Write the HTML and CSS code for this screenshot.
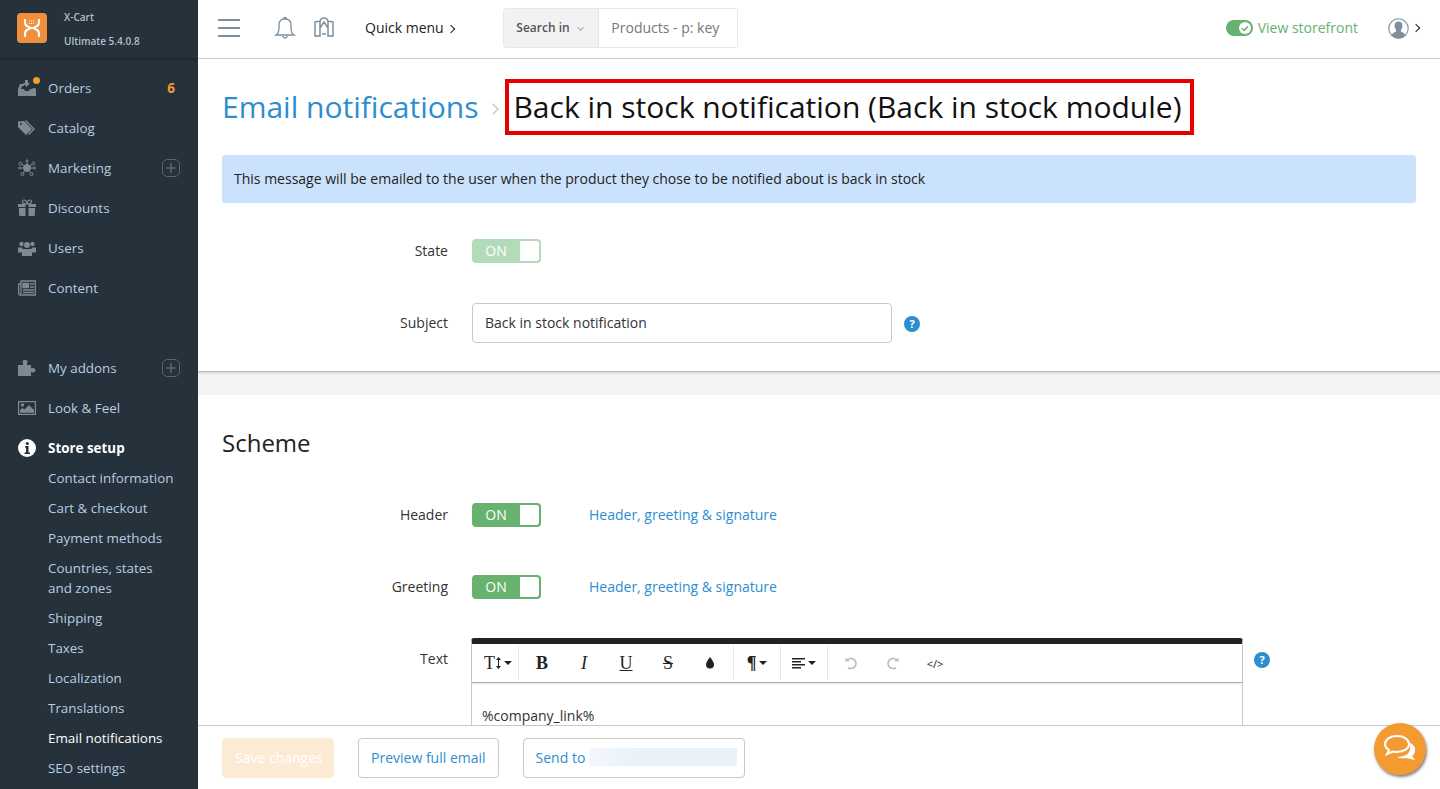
FILE: index.html
```html
<!DOCTYPE html>
<html lang="en">
<head>
  <meta charset="UTF-8">
  <title>Back in stock notification</title>
  <link rel="stylesheet" href="styles.css">
</head>
<body>
  <aside class="sidebar">
    <div class="brand">
      <div class="logo">
        <svg width="18" height="18" viewBox="0 0 18 18" fill="none" stroke="#fff" stroke-width="2.200"><path d="M2 0v3q0 4 4 5v2q-4 1-4 5v3M16 0v3q0 4-4 5v2q4 1 4 5v3M5 9h8"/><path d="M6 2h6M6 4.500h6" stroke-width="1.200" stroke-dasharray="1 1"/></svg>
      </div>
      <div class="brand-text">
        <span>X-Cart</span>
        <span>Ultimate 5.4.0.8</span>
      </div>
    </div>
    <nav class="menu">
      <a class="menu-item">
        <svg class="menu-icon" viewBox="0 0 18 16" fill="#7d8a94"><path d="M0 9l2-5h4v2H4l-1 3h3l1 2h4l1-2h3l-.5-1H17l1 1v7H0z"/><path d="M7 0h3v3h2l-3.500 4L5 3h2z"/></svg>
        <span class="dot"></span>
        <span class="menu-label">Orders</span>
        <span class="count">6</span>
      </a>
      <a class="menu-item">
        <svg class="menu-icon" viewBox="0 0 18 16" fill="#7d8a94"><path d="M0 1.500V7l8 8 6-6-8-8z"/><path d="M8 0l9 9-6 6-1-1 5-5-8-8z"/><circle cx="3" cy="4" r="1" fill="#25313b"/></svg>
        <span class="menu-label">Catalog</span>
      </a>
      <a class="menu-item">
        <svg class="menu-icon" viewBox="0 0 18 18" fill="none" stroke="#7d8a94" stroke-width="1"><circle cx="9" cy="9" r="3.500" fill="#7d8a94"/><path d="M9 9L3.500 5M9 9l5.500-4M9 9H2M9 9h7M9 9l-4 5M9 9l4 5M9 9V2"/><circle cx="2.500" cy="4.500" r="1.500" fill="#25313b"/><circle cx="15.500" cy="4.500" r="1.500" fill="#25313b"/><circle cx="1.500" cy="9" r="1" fill="#25313b"/><circle cx="16.500" cy="9" r="1" fill="#25313b"/><circle cx="4.500" cy="15" r="1.500" fill="#25313b"/><circle cx="13.500" cy="15" r="1.500" fill="#25313b"/><circle cx="9" cy="1.800" r="1" fill="#25313b"/></svg>
        <span class="menu-label">Marketing</span>
        <svg class="plus" width="18" height="18" viewBox="0 0 18 18" fill="none" stroke="#5a6670"><rect x=".5" y=".5" width="17" height="17" rx="5"/><path d="M4 9h10M9 4v10" stroke-width="1.500"/></svg>
      </a>
      <a class="menu-item">
        <svg class="menu-icon" viewBox="0 0 18 16" fill="#7d8a94"><path d="M0 4h7.500v3H0zM10.500 4H18v3h-7.500zM1 8h6.500v8H2.500Q1 16 1 14.500zM10.500 8H17v6.500Q17 16 15.500 16h-5z"/><path d="M9 4Q5 4 4.500 2T6 0q2 0 3 3 1-3 3-3t1.500 2T9 4z" fill="none" stroke="#7d8a94" stroke-width="1.200"/></svg>
        <span class="menu-label">Discounts</span>
      </a>
      <a class="menu-item">
        <svg class="menu-icon" viewBox="0 0 18 16" fill="#7d8a94"><circle cx="3.500" cy="4" r="2.200"/><circle cx="14.500" cy="4" r="2.200"/><circle cx="9" cy="5" r="3"/><path d="M0 7.500h4l1 2v3H0zM14 7.500h4v5h-5v-3zM5 9h8q1 0 1 1.500V16H4v-5.500Q4 9 5 9z"/></svg>
        <span class="menu-label">Users</span>
      </a>
      <a class="menu-item">
        <svg class="menu-icon" viewBox="0 0 18 16" fill="none" stroke="#7d8a94" stroke-width="1.300"><path d="M3 1h14.300v14H2q-1.300 0-1.300-1.500V4H3zM3 4v10"/><path d="M5 3.500h5.500v4H5z" fill="#7d8a94"/><path d="M12 4h4M12 7h4M5 10h11M5 12.500h11"/></svg>
        <span class="menu-label">Content</span>
      </a>
      <a class="menu-item group-start">
        <svg class="menu-icon" viewBox="0 0 18 16" fill="#7d8a94"><path d="M0 5h5V3q-1-1-.500-2T7 0t2.500 1T9 3v2h4v3.500q1-1 2.500-.5t2 1.800-1.500 2.400-3-.7V16H0z"/></svg>
        <span class="menu-label">My addons</span>
        <svg class="plus" width="18" height="18" viewBox="0 0 18 18" fill="none" stroke="#5a6670"><rect x=".5" y=".5" width="17" height="17" rx="5"/><path d="M4 9h10M9 4v10" stroke-width="1.500"/></svg>
      </a>
      <a class="menu-item">
        <svg class="menu-icon" viewBox="0 0 18 16" fill="#7d8a94"><path d="M0 1h18v14H0zm1.200 1.200v11.600h15.600V2.200z"/><circle cx="4.500" cy="5" r="1.700"/><path d="M2 12.800V10l2.500-2 2 1.500L11 5l5 5v2.800z"/></svg>
        <span class="menu-label">Look &amp; Feel</span>
      </a>
      <a class="menu-item active">
        <svg class="menu-icon" viewBox="0 0 18 18"><circle cx="9" cy="9" r="9" fill="#fff"/><path d="M7 7h3.500v6.500H12V15H6.500v-1.500H8V8.500H7z" fill="#25313b"/><circle cx="9.300" cy="4.500" r="1.600" fill="#25313b"/></svg>
        <span class="menu-label">Store setup</span>
      </a>
      <ul class="submenu">
        <li>Contact information</li>
        <li>Cart &amp; checkout</li>
        <li>Payment methods</li>
        <li>Countries, states and zones</li>
        <li>Shipping</li>
        <li>Taxes</li>
        <li>Localization</li>
        <li>Translations</li>
        <li class="current">Email notifications</li>
        <li>SEO settings</li>
      </ul>
    </nav>
  </aside>

  <div class="page">
    <header class="topbar">
      <div class="burger"><i></i><i></i><i></i></div>
      <svg class="bell" width="22" height="24" viewBox="0 0 22 24" fill="none" stroke="#7d8f9c" stroke-width="1.300"><path d="M2 19q3-2 3-7V9q0-6 6-6t6 6v3q0 5 3 7z"/><path d="M9.500 3q0-1.500 1.500-1.500T12.500 3M8.500 20q1 2 2.500 2t2.500-2"/></svg>
      <svg class="store" width="20" height="22" viewBox="0 0 20 22" fill="none" stroke="#7d8f9c" stroke-width="1.500"><path d="M1 5l5-1v15H1zM19 5l-5-1v15h5zM6 4q1-3 4-3t4 3M6 11l4-6 4 6M8 17h4"/></svg>
      <a class="quick">Quick menu <span class="chev"></span></a>
      <div class="search">
        <span class="search-in"><span class="search-label">Search in</span> <span class="caret"></span></span>
        <span class="search-field">Products - p: key</span>
      </div>
      <a class="storefront">
        <span class="store-toggle"><svg width="12" height="12" viewBox="0 0 12 12"><circle cx="6" cy="6" r="6" fill="#fff"/><path d="M3 6.200l2.200 2.200L9 4.200" fill="none" stroke="#66b26e" stroke-width="1.500"/></svg></span>
        <span class="storefront-text">View storefront</span>
      </a>
      <svg class="avatar" width="21" height="21" viewBox="0 0 21 21"><circle cx="10.500" cy="10.500" r="9.700" fill="#fff" stroke="#7d8f9c" stroke-width="1.100"/><path d="M3.500 17.500q1-3 4.500-4v-1.500Q6.500 10 6.500 7.500 7 3.500 10.500 3.500t4 4q0 2.500-1.500 4.500v1.500q3.500 1 4.500 4-3 3-7 3t-7-3z" fill="#7d8f9c"/></svg>
      <span class="chev user-chev"></span>
    </header>

    <main class="content">
      <section class="panel">
        <h1 class="title">
          <a class="crumb">Email notifications</a>
          <span class="crumb-sep"></span>
          <span class="title-box">Back in stock notification (Back in stock module)</span>
        </h1>
        <div class="alert">This message will be emailed to the user when the product they chose to be notified about is back in stock</div>
        <div class="row state-row">
          <label class="row-label">State</label>
          <span class="toggle faded"><span class="toggle-on">ON</span><span class="toggle-knob"></span></span>
        </div>
        <div class="row subject-row">
          <label class="row-label">Subject</label>
          <input class="text-input" type="text" value="Back in stock notification">
          <span class="help">?</span>
        </div>
      </section>

      <section class="panel scheme">
        <h2>Scheme</h2>
        <div class="row header-row">
          <label class="row-label">Header</label>
          <span class="toggle"><span class="toggle-on">ON</span><span class="toggle-knob"></span></span>
          <a class="row-link">Header, greeting &amp; signature</a>
        </div>
        <div class="row greeting-row">
          <label class="row-label">Greeting</label>
          <span class="toggle"><span class="toggle-on">ON</span><span class="toggle-knob"></span></span>
          <a class="row-link">Header, greeting &amp; signature</a>
        </div>
        <div class="row text-row">
          <label class="row-label">Text</label>
          <div class="editor">
            <div class="toolbar">
              <div class="tool-group first">
                <span class="tool serif wide">T<svg class="size-arrow" width="5" height="12" viewBox="0 0 5 12" fill="#222"><path d="M2 2.500h1v7H2z"/><path d="M2.500 0L5 3H0zM2.500 12L5 9H0z"/></svg><span class="tcaret"></span></span>
              </div>
              <div class="tool-group mid">
                <span class="tool serif"><b>B</b></span>
                <span class="tool serif"><i>I</i></span>
                <span class="tool serif"><u>U</u></span>
                <span class="tool serif"><s>S</s></span>
                <span class="tool"><svg width="10" height="12" viewBox="0 0 10 12"><path d="M5 0q4 5 4 7.500a4 4 0 0 1-8 0Q1 5 5 0z" fill="#222"/></svg></span>
              </div>
              <div class="tool-group">
                <span class="tool serif wide2"><b>¶</b><span class="tcaret"></span></span>
              </div>
              <div class="tool-group">
                <span class="tool wide2"><svg width="13" height="11" viewBox="0 0 13 11" fill="#222"><path d="M0 0h13v1.500H0zM0 3h9v1.500H0zM0 6h13v1.500H0zM0 9h9v1.500H0z"/></svg><span class="tcaret"></span></span>
              </div>
              <div class="tool-group last">
                <span class="tool"><svg width="14" height="14" viewBox="0 0 14 14" fill="none" stroke="#bbb" stroke-width="1.600"><path d="M4 11.500A5 5 0 1 0 3 4.500"/><path d="M1.500 1.500v4h4" fill="#bbb" stroke="none"/></svg></span>
                <span class="tool"><svg width="14" height="14" viewBox="0 0 14 14" fill="none" stroke="#bbb" stroke-width="1.600"><path d="M10 11.500a5 5 0 1 1 1-7"/><path d="M12.500 1.500v4h-4" fill="#bbb" stroke="none"/></svg></span>
                <span class="tool code">&lt;/&gt;</span>
              </div>
            </div>
            <div class="editor-body">%company_link%</div>
          </div>
          <span class="help">?</span>
        </div>
      </section>
    </main>

    <footer class="actions">
      <button class="btn save" type="button">Save changes</button>
      <button class="btn" type="button">Preview full email</button>
      <button class="btn send" type="button">Send to <span class="blurred"></span></button>
    </footer>
  </div>

  <a class="chat">
    <svg width="36" height="30" viewBox="0 0 36 30"><path d="M25 8q9 2 8 9 0 3-3 5l3 4-9-2q-5 1-9-1 11 0 13-7 1-4-3-8z" fill="#fff"/><path d="M15 2C8 2 3 5.500 3 10c0 2.500 1.500 4.500 4 6l-2 4 6-2.500q2 .5 4 .5c7 0 12-3.500 12-8S22 2 15 2z" fill="none" stroke="#fff" stroke-width="2"/></svg>
  </a>
</body>
</html>
```

FILE: styles.css
```css
* {
  box-sizing: border-box;
}

body {
  font-family: 'Open Sans', sans-serif;
  font-size: 14px;
  color: #333;
  background: #fff;
  display: flex;
  height: 100vh;
  margin: 0;
  overflow: hidden;
}

a {
  text-decoration: none;
}

/* sidebar */
.sidebar {
  flex: 0 0 198px;
  background: #25313b;
  color: #b8cde0;
  font-size: 13.4px;
  overflow: hidden;
}

.brand {
  display: flex;
  height: 58px;
  padding: 13px 0 0 17px;
  box-shadow: 0 1px 3px rgba(0, 0, 0, 0.35);
}

.logo {
  width: 30px;
  height: 30px;
  background: #f18f3c;
  border-radius: 4px;
  display: flex;
  align-items: center;
  justify-content: center;
}

.brand-text {
  display: flex;
  flex-direction: column;
  gap: 10px;
  margin: -3px 0 0 17px;
  font-size: 10px;
  line-height: 14px;
  font-weight: 600;
  color: #b5bfc8;
}

.menu {
  padding-top: 10px;
}

.menu-item {
  display: flex;
  align-items: center;
  position: relative;
  height: 40px;
  padding: 0 18px;
}

.menu-icon {
  flex: 0 0 18px;
  width: 18px;
  height: 18px;
  margin-right: 12px;
}

.menu-label {
  flex: 1;
  padding-bottom: 1px;
}

.dot {
  position: absolute;
  left: 33px;
  top: 9px;
  width: 7px;
  height: 7px;
  background: #f59a2f;
  border-radius: 50%;
}

.count {
  color: #f59a2f;
  font-weight: 700;
  margin-right: 5px;
}

.group-start {
  margin-top: 40px;
}

.active {
  color: #fff;
  font-weight: 700;
}

.submenu {
  list-style: none;
  margin: -5px 0 0;
  padding: 0 20px 0 48px;
}

.submenu li {
  padding: 5px 0;
  line-height: 20px;
}

.submenu .current {
  color: #fff;
}

/* top bar */
.page {
  flex: 1;
  min-width: 0;
  display: flex;
  flex-direction: column;
}

.topbar {
  flex: 0 0 59px;
  display: flex;
  align-items: center;
  padding: 0 17px 2px 20px;
  border-bottom: 1px solid #c8c8c8;
}

.burger {
  width: 22px;
  margin-right: 34px;
}

.burger i {
  display: block;
  height: 2px;
  background: #7d8f9c;
  margin: 6px 0;
}

.bell {
  margin-top: -1px;
}

.store {
  margin: 0 0 0 18px;
}

.quick {
  color: #222;
  margin-left: 31px;
  padding-bottom: 2px;
}

.chev {
  display: inline-block;
  width: 6px;
  height: 6px;
  border-top: 1px solid #222;
  border-right: 1px solid #222;
  transform: rotate(45deg);
  margin: 0 4px 1px 1px;
}

.search {
  display: flex;
  height: 40px;
  width: 235px;
  margin-left: 45px;
  border: 1px solid #e8e8e8;
  border-radius: 3px;
}

.search-in {
  display: flex;
  align-items: center;
  padding: 0 12px;
  width: 95px;
  background: #f2f2f2;
  border-right: 1px solid #e4e4e4;
  font-size: 12px;
  font-weight: 600;
  color: #555;
  white-space: nowrap;
  gap: 5px;
}

.search-label {
  padding-bottom: 2px;
}

.caret {
  width: 5px;
  height: 5px;
  border-right: 1px solid #aaa;
  border-bottom: 1px solid #aaa;
  transform: rotate(45deg);
  margin: -2px 0 0 3px;
}

.search-field {
  padding: 10px 12px;
  color: #777;
  line-height: 18px;
  white-space: nowrap;
}

.storefront {
  display: flex;
  align-items: center;
  gap: 5px;
  margin-left: auto;
  color: #66b26e;
}

.storefront-text {
  padding-bottom: 2px;
}

.store-toggle {
  display: flex;
  align-items: center;
  justify-content: flex-end;
  width: 27px;
  height: 16px;
  padding-right: 2px;
  background: #66b26e;
  border-radius: 8px;
}

.avatar {
  margin-left: 30px;
}

.user-chev {
  margin-left: 4px;
}

/* content */
.content {
  flex: 1;
  min-height: 0;
  overflow: hidden;
  background: #f3f3f3;
}

.panel {
  background: #fff;
  padding: 0 24px;
}

.panel:first-child {
  height: 313px;
  border-bottom: 1px solid #bbb;
  box-shadow: 0 1px 2px rgba(0, 0, 0, 0.15);
  padding-top: 20px;
}

.title {
  display: flex;
  align-items: center;
  height: 56px;
  margin: 0;
  font-size: 30px;
  font-weight: 400;
  white-space: nowrap;
}

.crumb {
  color: #2d8ecf;
  padding-bottom: 2px;
}

.crumb-sep {
  width: 8px;
  height: 8px;
  border-top: 1.500px solid #b8b8b8;
  border-right: 1.500px solid #b8b8b8;
  transform: rotate(45deg);
  margin: 4px 8px 0 11px;
}

.title-box {
  border: 4px solid #e60000;
  color: #111;
  padding: 0 8px 0 4px;
  height: 56px;
  line-height: 47px;
}

.alert {
  height: 48px;
  margin-top: 20px;
  padding: 14px 12px;
  line-height: 20px;
  background: #cbe2fc;
  border-radius: 3px;
  color: #222;
}

.row {
  display: flex;
  align-items: center;
}

.row-label {
  width: 226px;
  text-align: right;
  margin-right: 24px;
  padding-bottom: 2px;
  color: #333;
}

.state-row {
  margin-top: 36px;
}

.subject-row {
  margin-top: 40px;
}

.toggle {
  display: flex;
  width: 69px;
  height: 24px;
  border: 2px solid #66b26e;
  border-radius: 4px;
  background: #66b26e;
  overflow: hidden;
  color: #fff;
}

.toggle.faded {
  border-color: #b2dbb8;
  background: #b2dbb8;
}

.toggle-on {
  flex: 1;
  text-align: center;
  line-height: 20px;
  padding-right: 2px;
}

.toggle-knob {
  width: 19px;
  background: #fff;
  border-radius: 0 2px 2px 0;
}

.text-input {
  width: 420px;
  height: 40px;
  padding: 0 12px 2px;
  border: 1px solid #c8c8c8;
  border-radius: 4px;
  font: 14px 'Open Sans', sans-serif;
  color: #333;
}

.help {
  width: 16px;
  height: 16px;
  margin: 2px 0 0 12px;
  background: #2d8ecf;
  border-radius: 50%;
  color: #fff;
  font-size: 11px;
  font-weight: 700;
  line-height: 16px;
  text-align: center;
}

.scheme {
  margin-top: 23px;
  height: 500px;
  padding-top: 33px;
}

.scheme h2 {
  margin: 0;
  font-size: 24px;
  font-weight: 400;
  line-height: 30px;
  color: #222;
}

.header-row {
  margin-top: 45px;
}

.greeting-row {
  margin-top: 48px;
}

.row-link {
  margin-left: 48px;
  padding-bottom: 2px;
  color: #2d8ecf;
}

.text-row {
  margin-top: 39px;
  align-items: flex-start;
}

.text-row .row-label {
  margin-top: 11px;
  margin-right: 23px;
}

.text-row .help {
  margin: 14px 0 0 11px;
}

/* editor */
.editor {
  width: 772px;
  border: 1px solid #c8c8c8;
  border-top: 6px solid #222;
  border-radius: 3px 3px 0 0;
  height: 120px;
}

.toolbar {
  display: flex;
  height: 39px;
  border-bottom: 1px solid #aaa;
  box-shadow: 0 1px 2px rgba(0, 0, 0, 0.1);
  padding: 2px 0;
}

.tool-group {
  display: flex;
  border-right: 1px solid #e8e8e8;
}

.tool-group.mid {
  padding: 0 2px;
}

.tool-group.last {
  border-right: 0;
  padding-left: 2px;
}

.tool {
  display: flex;
  align-items: center;
  justify-content: center;
  width: 42px;
  color: #222;
  font-size: 15px;
}

.serif {
  font-family: 'Liberation Serif', serif;
  font-size: 18px;
}

.tool.wide {
  width: 46px;
  padding-left: 6px;
}

.tool.wide2 {
  width: 46px;
}

.size-arrow {
  margin-left: 1px;
}

.tcaret {
  width: 0;
  height: 0;
  margin-left: 3px;
  border-left: 4px solid transparent;
  border-right: 4px solid transparent;
  border-top: 4px solid #222;
}

.code {
  font-size: 11px;
}

.editor-body {
  padding: 23px 10px 0;
  color: #333;
  line-height: 20px;
}

/* bottom actions */
.actions {
  flex: 0 0 64px;
  display: flex;
  gap: 24px;
  padding: 12px 24px 11px;
  background: #fff;
  border-top: 1px solid #c8c8c8;
}

.btn {
  height: 40px;
  padding: 0 12px 2px;
  background: #fff;
  border: 1px solid #c8c8c8;
  border-radius: 4px;
  color: #2d8ecf;
  font: 14px 'Open Sans', sans-serif;
  white-space: nowrap;
}

.save {
  width: 112px;
  background: #fcebd4;
  border-color: #fcebd4;
  color: #fff;
}

.send {
  display: flex;
  align-items: center;
  width: 222px;
}

.blurred {
  flex: 0 0 148px;
  height: 18px;
  margin-left: 4px;
  background: linear-gradient(90deg, #f2f7fc, #e6f1fa 40%, #e8f2fb);
}

/* chat */
.chat {
  position: fixed;
  left: 1374px;
  top: 723px;
  width: 52px;
  height: 52px;
  padding: 11px 0 0 8px;
  background: #f39a33;
  border-radius: 50%;
  box-shadow: 1px 2px 3px rgba(0, 0, 0, 0.5);
}
```
